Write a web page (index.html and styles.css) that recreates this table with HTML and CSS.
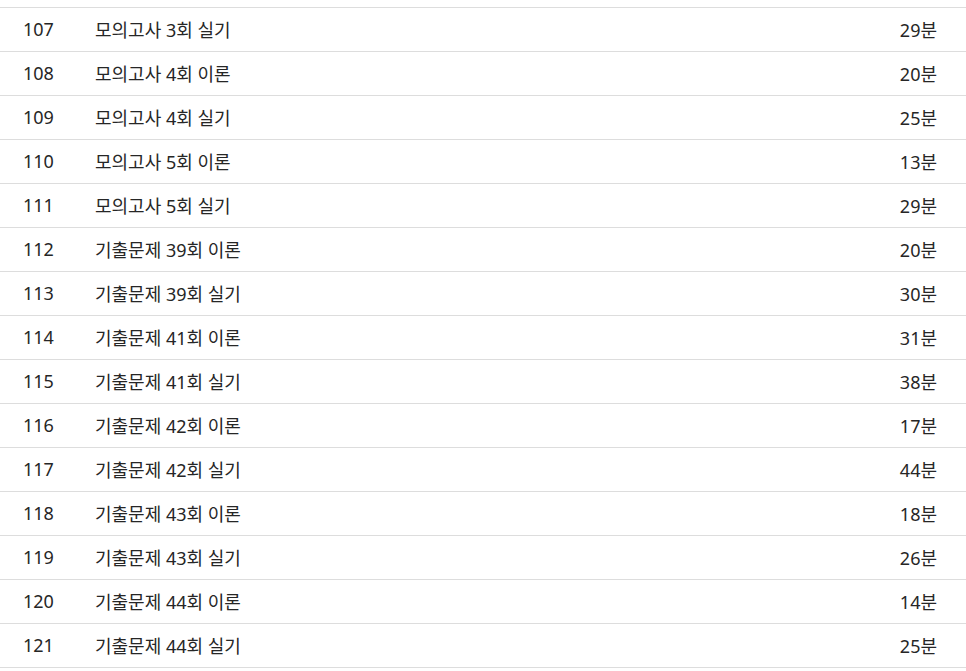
FILE: index.html
```html
<!DOCTYPE html>
<html lang="ko">
<head>
<meta charset="utf-8">
<link rel="stylesheet" href="styles.css">
</head>
<body>
<div class="page">
  <ul class="list">
    <li class="row"><span class="num">107</span><span class="title">모의고사 3회 실기</span><span class="time">29분</span></li>
    <li class="row"><span class="num">108</span><span class="title">모의고사 4회 이론</span><span class="time">20분</span></li>
    <li class="row"><span class="num">109</span><span class="title">모의고사 4회 실기</span><span class="time">25분</span></li>
    <li class="row"><span class="num">110</span><span class="title">모의고사 5회 이론</span><span class="time">13분</span></li>
    <li class="row"><span class="num">111</span><span class="title">모의고사 5회 실기</span><span class="time">29분</span></li>
    <li class="row"><span class="num">112</span><span class="title">기출문제 39회 이론</span><span class="time">20분</span></li>
    <li class="row"><span class="num">113</span><span class="title">기출문제 39회 실기</span><span class="time">30분</span></li>
    <li class="row"><span class="num">114</span><span class="title">기출문제 41회 이론</span><span class="time">31분</span></li>
    <li class="row"><span class="num">115</span><span class="title">기출문제 41회 실기</span><span class="time">38분</span></li>
    <li class="row"><span class="num">116</span><span class="title">기출문제 42회 이론</span><span class="time">17분</span></li>
    <li class="row"><span class="num">117</span><span class="title">기출문제 42회 실기</span><span class="time">44분</span></li>
    <li class="row"><span class="num">118</span><span class="title">기출문제 43회 이론</span><span class="time">18분</span></li>
    <li class="row"><span class="num">119</span><span class="title">기출문제 43회 실기</span><span class="time">26분</span></li>
    <li class="row"><span class="num">120</span><span class="title">기출문제 44회 이론</span><span class="time">14분</span></li>
    <li class="row"><span class="num">121</span><span class="title">기출문제 44회 실기</span><span class="time">25분</span></li>
  </ul>
</div>
</body>
</html>
```

FILE: styles.css
```css
html, body {
  margin: 0;
  padding: 0;
  background: #ffffff;
}
body {
  font-family: "Noto Sans", "Noto Sans CJK KR", sans-serif;
  color: #262626;
}
.page {
  padding-top: 7px;
}
.list {
  list-style: none;
  margin: 0;
  padding: 0;
  border-top: 1px solid #dddddd;
}
.row {
  display: flex;
  align-items: center;
  box-sizing: border-box;
  height: 44px;
  border-bottom: 1px solid #dddddd;
  padding: 0 29px 2px 23px;
  font-size: 18px;
}
.num {
  width: 72px;
  flex-shrink: 0;
}
.title {
  flex: 1;
}
.time {
  text-align: right;
}
```
